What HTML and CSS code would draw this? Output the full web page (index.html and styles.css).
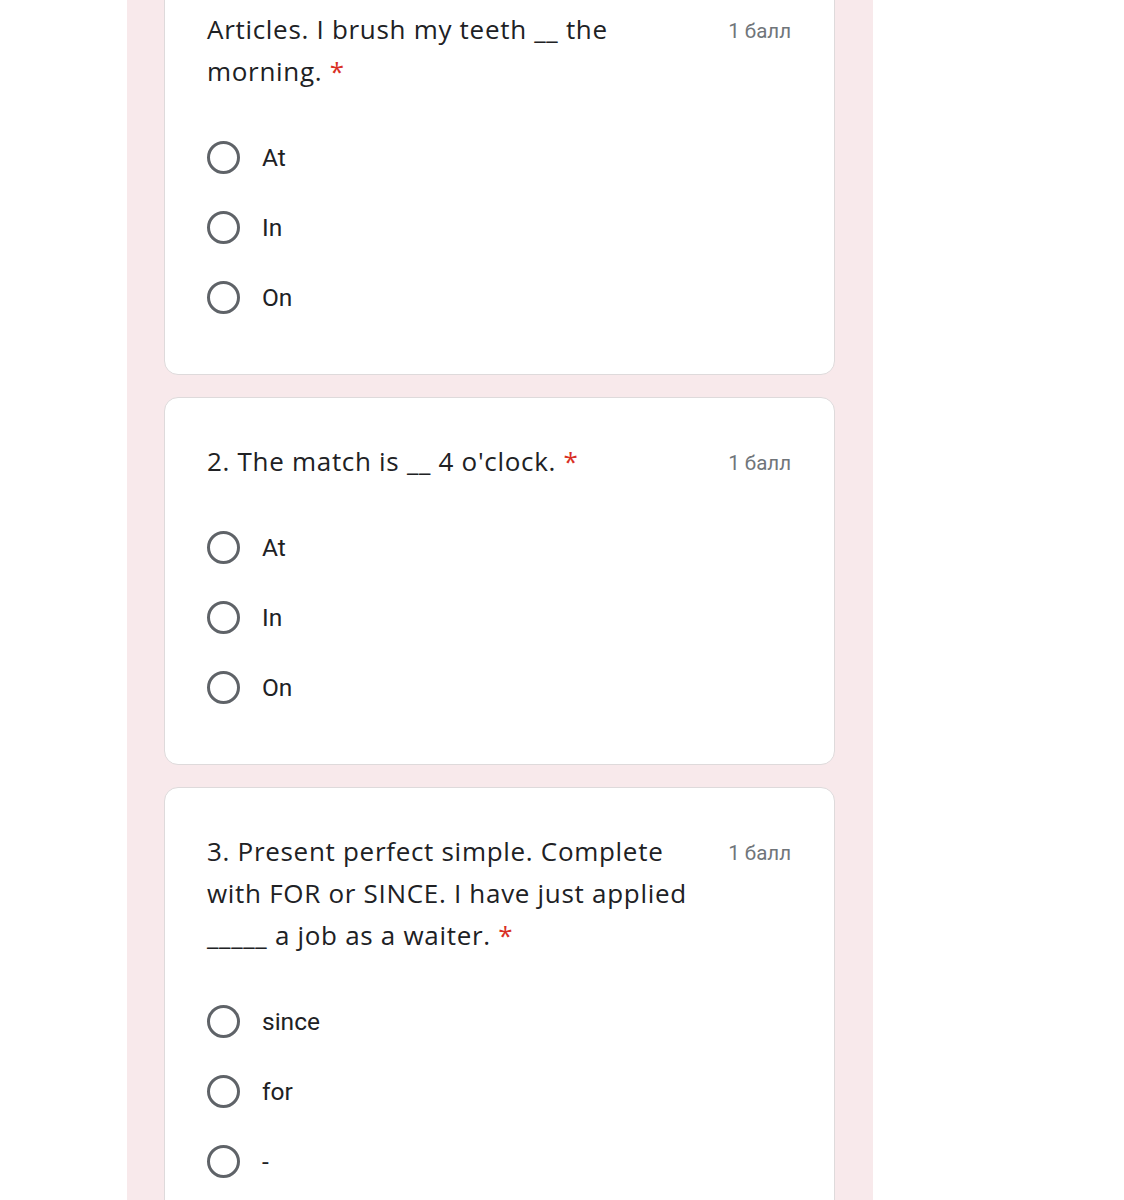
FILE: index.html
```html
<!DOCTYPE html>
<html lang="ru">
<head>
<meta charset="utf-8">
<title>Форма</title>
<link rel="stylesheet" href="styles.css">
</head>
<body>
<div class="page">
  <div class="column">
    <section class="card card-first">
      <div class="head">
        <div class="title">Articles. I brush my teeth __ the morning.&nbsp;<span class="req">*</span></div>
        <div class="points">1 балл</div>
      </div>
      <div class="options">
        <label class="opt"><span class="radio"></span><span class="lbl">At</span></label>
        <label class="opt"><span class="radio"></span><span class="lbl">In</span></label>
        <label class="opt"><span class="radio"></span><span class="lbl">On</span></label>
      </div>
    </section>
    <section class="card">
      <div class="head">
        <div class="title">2. The match is __ 4 o'clock.&nbsp;<span class="req">*</span></div>
        <div class="points">1 балл</div>
      </div>
      <div class="options">
        <label class="opt"><span class="radio"></span><span class="lbl">At</span></label>
        <label class="opt"><span class="radio"></span><span class="lbl">In</span></label>
        <label class="opt"><span class="radio"></span><span class="lbl">On</span></label>
      </div>
    </section>
    <section class="card">
      <div class="head">
        <div class="title">3. Present perfect simple. Complete with FOR or SINCE. I have just applied _____ a job as a waiter.&nbsp;<span class="req">*</span></div>
        <div class="points">1 балл</div>
      </div>
      <div class="options">
        <label class="opt"><span class="radio"></span><span class="lbl">since</span></label>
        <label class="opt"><span class="radio"></span><span class="lbl">for</span></label>
        <label class="opt"><span class="radio"></span><span class="lbl">-</span></label>
      </div>
    </section>
  </div>
</div>
</body>
</html>
```
FILE: styles.css
```css
html, body {
  margin: 0;
  padding: 0;
  background: #ffffff;
}
.page {
  height: 1200px;
  overflow: hidden;
}
.column {
  width: 746px;
  margin-left: 127px;
  background: #f8e9eb;
  padding: 0 38px 40px 37px;
  box-sizing: border-box;
  min-height: 1300px;
  display: flex;
  flex-direction: column;
  gap: 22px;
}
.card {
  background: #ffffff;
  border: 1px solid #dedadb;
  border-radius: 14px;
  padding: 42px 43px 42px 42px;
}
.card-first {
  margin-top: -35px;
  border-top-left-radius: 0;
  border-top-right-radius: 0;
}
.head {
  display: flex;
  align-items: flex-start;
  margin-bottom: 30px;
}
.title {
  width: 492px;
  font-family: "Open Sans", "Noto Sans", sans-serif;
  font-size: 26px;
  line-height: 42px;
  color: #202124;
  letter-spacing: 0.7px;
}
.req {
  color: #d93025;
  letter-spacing: 0;
}
.points {
  margin-left: auto;
  margin-bottom: -4px;
  font-family: Roboto, "Liberation Sans", sans-serif;
  font-size: 20.5px;
  line-height: 46px;
  color: #70757a;
}
.options {
  display: flex;
  flex-direction: column;
}
.opt {
  display: flex;
  align-items: center;
  height: 70px;
}
.radio {
  width: 27px;
  height: 27px;
  border: 3.5px solid #5f6368;
  border-radius: 50%;
  flex: none;
}
.lbl {
  margin-left: 22px;
  font-family: Roboto, "Liberation Sans", sans-serif;
  font-size: 24.5px;
  color: #202124;
}
```
